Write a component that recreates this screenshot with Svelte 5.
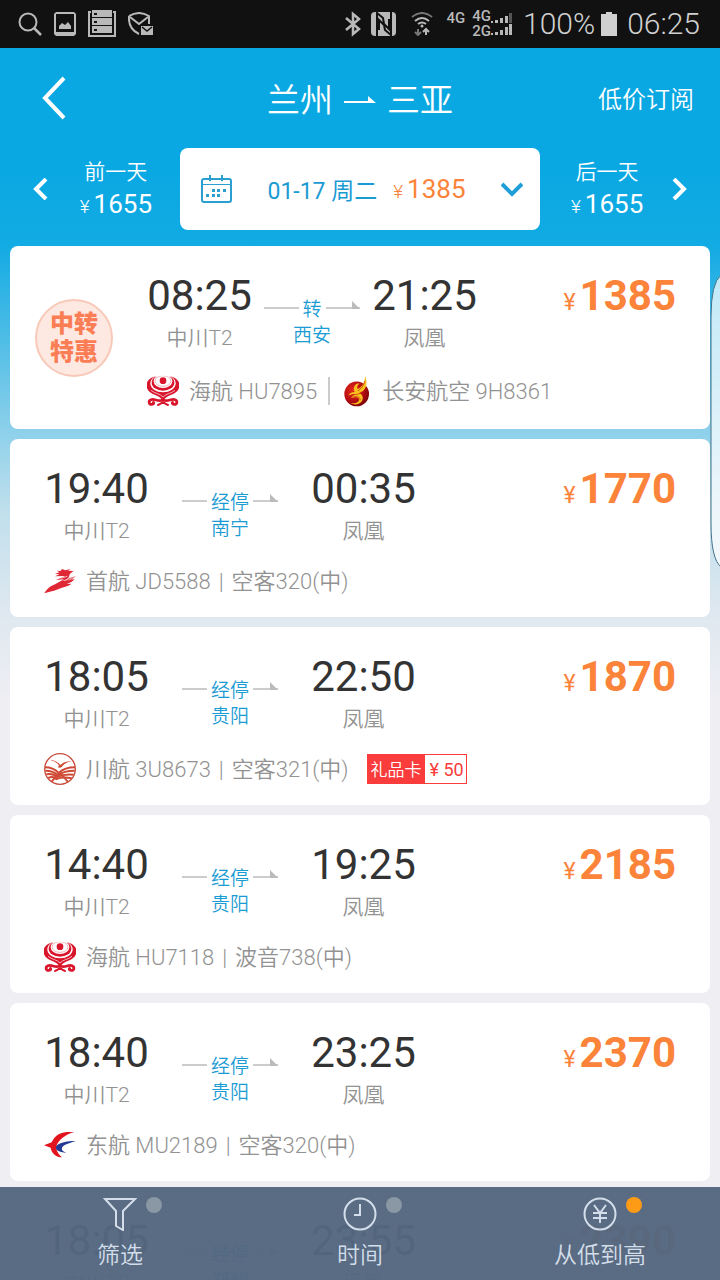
<script>
  const flights = [
    { dep: '08:25', arr: '21:25', from: '中川T2', to: '凤凰', via: '转', city: '西安', price: 1385, transfer: true,
      legs: [{ logo: 'hna', name: '海航 HU7895' }, { logo: 'changan', name: '长安航空 9H8361' }] },
    { dep: '19:40', arr: '00:35', from: '中川T2', to: '凤凰', via: '经停', city: '南宁', price: 1770,
      legs: [{ logo: 'capital', name: '首航 JD5588', plane: '空客320(中)' }] },
    { dep: '18:05', arr: '22:50', from: '中川T2', to: '凤凰', via: '经停', city: '贵阳', price: 1870, gift: 50,
      legs: [{ logo: 'sichuan', name: '川航 3U8673', plane: '空客321(中)' }] },
    { dep: '14:40', arr: '19:25', from: '中川T2', to: '凤凰', via: '经停', city: '贵阳', price: 2185,
      legs: [{ logo: 'hna', name: '海航 HU7118', plane: '波音738(中)' }] },
    { dep: '18:40', arr: '23:25', from: '中川T2', to: '凤凰', via: '经停', city: '贵阳', price: 2370,
      legs: [{ logo: 'eastern', name: '东航 MU2189', plane: '空客320(中)' }] },
    { dep: '18:05', arr: '23:55', from: '中川T2', to: '凤凰', via: '经停', city: '郑州', price: 2390, legs: [] }
  ];
  const tabs = [
    { icon: 'filter', label: '筛选', active: false },
    { icon: 'clock', label: '时间', active: false },
    { icon: 'yen', label: '从低到高', active: true }
  ];
</script>

{#snippet airline(kind)}
  {#if kind === 'hna'}
    <svg class="logo" viewBox="0 0 96 96" aria-hidden="true">
      <path fill="#d9152b" d="M30 4C-8 8-10 44 16 56c15 6 27 11 32 22 5-11 17-16 32-22C106 44 104 8 66 4Z" />
      <ellipse cx="48" cy="25" rx="38" ry="27" fill="#fff" />
      <ellipse cx="48" cy="23" rx="34" ry="24" fill="#d9152b" />
      <ellipse cx="48" cy="19" rx="28" ry="20" fill="#fff" />
      <ellipse cx="48" cy="18" rx="24" ry="16" fill="none" stroke="#e58b93" stroke-width="2" />
      <path fill="#fff" d="M26 0h44v6Q48-2 26 6Z" />
      <circle cx="48" cy="17" r="10" fill="#d9152b" />
      <path fill="none" stroke="#fff" stroke-width="2" d="M12 46c12 10 28 10 36 20 8-10 24-10 36-20" />
      <g fill="none" stroke="#d9152b" stroke-width="8" stroke-linecap="round">
        <path d="M46 75c-11 7-24-5-34-1-9 4-7 15 3 14 5 0 7-4 4-6" />
        <path d="M50 75c11 7 24-5 34-1 9 4 7 15-3 14-5 0-7-4-4-6" />
        <path stroke-width="6" d="M33 90c6-2 10-5 15-9 5 4 9 7 15 9" />
      </g>
    </svg>
  {:else if kind === 'changan'}
    <svg class="logo narrow" viewBox="0 0 80 98" aria-hidden="true">
      <defs>
        <radialGradient id="ball" cx="35%" cy="35%" r="70%">
          <stop offset="0" stop-color="#e4291c" /><stop offset="0.6" stop-color="#b70d12" /><stop offset="1" stop-color="#7d0509" />
        </radialGradient>
      </defs>
      <circle cx="39" cy="58" r="38" fill="url(#ball)" />
      <path fill="#f8c01c" d="M65 2c9 24 4 46-18 53 12 5 14 19 6 28-9 10-24 9-33 3 15 2 26-1 26-11 0-8-12-8-24-5 2-5 8-9 14-12-8 0-14 0-23 5 4-8 12-11 20-11-5-7-4-17 4-24 3-3 8-3 11-1-7 3-9 10-6 16C60 34 64 20 65 2Z" />
      <path fill="none" stroke="#c61b10" stroke-width="2" d="M64 18c-3 14-10 23-21 31M30 61c9-1 18-2 25-10M26 68c12-4 24-1 24 9" />
    </svg>
  {:else if kind === 'capital'}
    <svg class="logo" viewBox="0 0 96 96" aria-hidden="true">
      <g fill="#e02835">
        <path d="M96 12 80 25c-6 4-2 9-7 13-6 6-12 7-19 10l22-2 16-4c-6 9-14 11-24 15l14-1c-9 9-22 9-33 13L29 77 1 85c9-15 18-22 32-27l27-15-24 2c9-5 20-7 27-12l-30 1 14-6-14-1 13-5-8-5 12 1 4-6 10 4 16-4-8 5 16 1 8-6Z" />
        <path opacity="0.6" d="m90 27-15 12 21-6-14 13-26 7ZM74 60 40 74l-14 4 18-18Z" />
      </g>
      <path fill="none" stroke="#fff" stroke-width="2" d="M50 40l20-6" />
    </svg>
  {:else if kind === 'sichuan'}
    <svg class="logo" viewBox="0 0 96 96" aria-hidden="true">
      <circle cx="48" cy="48" r="46" fill="#fff" stroke="#c84d3c" stroke-width="4" />
      <path fill="#cf4a35" d="M18 20c14 2 23 6 31 16 8-8 20-12 34-11-13 2-22 7-29 16-4 4-9 4-13 1 3-1 4-3 3-6-6-8-15-12-26-16Z" />
      <g fill="none" stroke="#cf4a35" stroke-width="6">
        <path d="M3 43c20 0 32 8 41 17 11-10 24-17 49-17" />
        <path d="M4 53c17 0 29 5 37 14 12-9 30-14 51-14" />
        <path d="M7 64c15-3 25 1 32 8 13-6 30-9 50-7" />
        <path d="M13 75c11-5 18-3 24 3 13-5 28-6 46-2" />
        <path d="M23 86c8-11 15-19 23-26 9 7 17 15 26 27" />
      </g>
    </svg>
  {:else}
    <svg class="logo" viewBox="0 0 96 96" aria-hidden="true">
      <path fill="#e3141e" d="M91 9C70 14 50 28 40 44c-7 14-1 27 14 41C33 85 22 70 20 56L0 49l23-9C35 13 54 7 91 9Z" />
      <path fill="#243a94" d="M96 36C72 43 58 48 54 56c-3 6 2 11 13 15-22-1-34-9-31-18 5-11 31-17 60-17Z" />
    </svg>
  {/if}
{/snippet}

{#snippet chevron(d)}
  <svg class="chev" viewBox="0 0 22 22" aria-hidden="true"><path {d} fill="none" stroke="currentColor" stroke-width="4" /></svg>
{/snippet}

<div class="screen">
  <div class="status">
    <div class="group">
      <svg width="24" height="26" viewBox="0 0 24 26" aria-hidden="true"><g fill="none" stroke="#b9b9b9" stroke-width="2"><circle cx="10" cy="11" r="8.5" /><path d="m16 17 7 7" stroke-width="2.5" /></g></svg>
      <svg width="22" height="24" viewBox="0 0 22 24" aria-hidden="true"><path fill="#b9b9b9" fill-rule="evenodd" d="M2 0h18l2 2v20l-2 2H2l-2-2V2ZM2 2v18h18V2Z" /><path fill="#b9b9b9" d="M5 17v-3l3-3 3 2 3-3 3 4v3Z" /></svg>
      <svg width="28" height="28" viewBox="0 0 28 28" aria-hidden="true"><path fill="none" stroke="#b9b9b9" stroke-width="2" d="M3 2H1v24h26V2h-2" /><path fill="#b9b9b9" d="M4 0h20v7H4zM4 8h20v7H4zM4 16h20v7H4z" /><path fill="#111" d="M6 3h3v2H6zM6 11h3v2H6zM6 19h3v2H6z" /></svg>
      <svg width="26" height="24" viewBox="0 0 26 24" aria-hidden="true"><g fill="none" stroke="#b9b9b9" stroke-width="2"><path d="M1 4q10-6 20 0v8M1 4q-1 13 10 18M2 5l9 7 9-7" /></g><path fill="#b9b9b9" d="M13 14h12v9H13z" /><path fill="none" stroke="#111" stroke-width="1.5" d="m14 15 5 4 5-4" /></svg>
    </div>
    <div class="group right">
      <svg width="16" height="26" viewBox="0 0 16 26" aria-hidden="true"><path fill="none" stroke="#b9b9b9" stroke-width="2.5" d="m1 7 13 11-6 5V3l6 5L1 19" /></svg>
      <svg width="26" height="25" viewBox="0 0 26 25" aria-hidden="true"><rect width="25" height="24" rx="4" fill="#b9b9b9" /><path fill="none" stroke="#111" stroke-width="2" d="M6 24V1l6 5 1 6 5 5V7M20 0v23l-6-5-1-5-5-5v10" /></svg>
      <svg class="wifi" width="22" height="24" viewBox="0 0 22 24" aria-hidden="true"><g fill="none" stroke="#b9b9b9" stroke-width="2"><path stroke="#777" d="M1 5q10-8 20 0" /><path d="M4 9q7-6 14 0M7 12q4-3 8 0" /><path stroke="#777" d="M7 17v6m-3-3 3 3 3-3" /><path d="M15 23v-6m-3 3 3-3 3 3" /></g><circle cx="11" cy="14" r="1.5" fill="#b9b9b9" /></svg>
      <span class="net single">4G</span>
      <span class="net">4G<br />2G</span>
      <svg class="bars" width="22" height="24" viewBox="0 0 22 24" aria-hidden="true"><path fill="#b9b9b9" d="M0 9h2v2H0zM4 8h3v3H4zM9 6h3v5H9zM14 4h3v7h-3zM0 21h2v2H0zM4 20h3v3H4zM9 18h3v5H9zM14 15h3v8h-3zM18 12h3v11h-3z" /><path fill="#555" d="M18 1h3v10h-3z" /></svg>
      <span class="big percent">100%</span>
      <svg width="16" height="24" viewBox="0 0 16 24" aria-hidden="true"><path fill="#d0d0d0" d="M5 0h6v2h5v22H0V2h5Z" /></svg>
      <span class="big">06:25</span>
    </div>
  </div>

  <header>
    <button class="back" aria-label="返回"><svg width="26" height="44" viewBox="0 0 26 44" aria-hidden="true"><path d="M22 2 3 22l19 20" fill="none" stroke="#fff" stroke-width="4" /></svg></button>
    <h1>兰州 <svg width="32" height="10" viewBox="0 0 32 10" aria-hidden="true"><path fill="#fff" d="M0 5h24V0l8 7H0Z" /></svg> 三亚</h1>
    <button class="subscribe">低价订阅</button>
  </header>

  <div class="dates">
    <button class="day">
      {@render chevron('m16 1-10 10 10 10')}
      <span class="day-text"><span>前一天</span><span class="amount"><small>¥</small>1655</span></span>
    </button>
    <button class="current">
      <svg width="31" height="28" viewBox="0 0 31 28" aria-hidden="true"><g fill="none" stroke="#2a9fd0" stroke-width="2"><rect x="1" y="4" width="29" height="23" rx="2" /><path d="M9 0v6M21 0v6" /><path stroke-width="1" d="M1 9.500h29" /></g><path fill="#2a9fd0" d="M11 14h3v3h-3zM16 14h3v3h-3zM22 14h3v3h-3zM5 19h3v3H5zM11 19h3v3h-3zM16 19h3v3h-3z" /></svg>
      <span class="picked">01-17 周二 <span class="amount orange"><small>¥</small>1385</span></span>
      <span class="blue">{@render chevron('m1 6 10 10 10-10')}</span>
    </button>
    <button class="day next">
      <span class="day-text"><span>后一天</span><span class="amount"><small>¥</small>1655</span></span>
      {@render chevron('m6 1 10 10-10 10')}
    </button>
  </div>

  <main>
    {#each flights as f}
      <article class:transfer={f.transfer}>
        {#if f.transfer}<div class="badge"><span>中转<br />特惠</span></div>{/if}
        <div class="body">
          <div class="route">
            <div class="stop"><strong>{f.dep}</strong><span>{f.from}</span></div>
            <div class="via">
              <div class="line">
                <i></i><span>{f.via}</span><i></i>
                <svg width="8" height="8" viewBox="0 0 8 8" aria-hidden="true"><path fill="#bbb" d="M0 0 8 8H0Z" /></svg>
              </div>
              <span>{f.city}</span>
            </div>
            <div class="stop"><strong>{f.arr}</strong><span>{f.to}</span></div>
            <div class="price"><small>¥</small>{f.price}</div>
          </div>
          <div class="legs">
            {#each f.legs as leg, i}
              {#if i > 0}<span class="rule"></span>{/if}
              {@render airline(leg.logo)}
              <span class="leg">{leg.name}{#if leg.plane}<span class="bar">|</span>{leg.plane}{/if}</span>
            {/each}
            {#if f.gift}<span class="gift"><b>礼品卡</b><span>¥ {f.gift}</span></span>{/if}
          </div>
        </div>
      </article>
    {/each}
  </main>

  <svg class="edge" width="10" height="294" viewBox="0 0 10 294" aria-hidden="true">
    <path fill="#fff" fill-opacity="0.72" stroke="#47748a" d="M11 0Q1 8 1 42v206q0 36 10 44" />
  </svg>

  <nav>
    {#each tabs as t}
      <button>
        <span class="tab-icon">
          <svg width="34" height="34" viewBox="0 0 34 34" aria-hidden="true">
            <g fill="none" stroke="#d3deea" stroke-width="2">
              {#if t.icon === 'filter'}
                <path d="M2 2h30L20 14v19l-7-4V14Z" />
              {:else if t.icon === 'clock'}
                <circle cx="17" cy="17" r="15.5" /><path d="M17 7v11H11" />
              {:else}
                <circle cx="17" cy="17" r="15.5" /><path d="m11 8 6 8 6-8M17 16v10M10 16h14M10 21h14" />
              {/if}
            </g>
          </svg>
          <i class="dot" class:active={t.active}></i>
        </span>
        <span>{t.label}</span>
      </button>
    {/each}
  </nav>
</div>

<style>
  :global(body) { margin: 0; }
  .screen {
    position: relative;
    display: flex;
    flex-direction: column;
    height: 100vh;
    overflow: hidden;
    font-family: Roboto, "Noto Sans CJK SC", sans-serif;
    color: #fff;
    background: linear-gradient(#0aa8e3 0, #0aa8e3 170px, #12abe3 245px, #4fbde6 340px, #8fd1eb 434px, #c0dfec 510px, #dfe8f0 615px, #eeeef3 700px);
  }
  button { border: 0; padding: 0; background: none; color: inherit; font: inherit; cursor: pointer; }
  svg { display: block; flex: none; }

  .status { display: flex; justify-content: space-between; align-items: center; flex: none; height: 48px; padding: 0 20px 0 18px; background: #111; color: #b9b9b9; }
  .group { display: flex; align-items: center; gap: 12px; }
  .group.right { gap: 10px; }
  .wifi { margin: 0 4px; }
  .net { font-size: 15px; line-height: 15px; font-weight: 500; }
  .net.single { padding-bottom: 12px; margin-right: -3px; }
  .bars { margin-left: -10px; }
  .big { font-size: 30px; line-height: 48px; color: #d0d0d0; font-weight: 300; }
  .percent { margin-right: -4px; }

  header { display: grid; grid-template-columns: 1fr auto 1fr; align-items: center; flex: none; height: 100px; padding: 0 26px; }
  .back { justify-self: start; padding-left: 16px; }
  h1 { display: flex; align-items: center; gap: 11px; margin: 0; padding-top: 5px; font-size: 33px; line-height: 48px; font-weight: 350; }
  .subscribe { justify-self: end; padding-top: 4px; font-size: 24px; line-height: 32px; font-weight: 350; }

  .dates { display: grid; grid-template-columns: 1fr 2fr 1fr; flex: none; height: 82px; margin-bottom: 16px; }
  .day { display: flex; justify-content: space-between; align-items: center; padding: 0 28px 0 30px; }
  .day.next { padding: 0 30px 0 31px; }
  .chev { width: 22px; height: 22px; }
  .day-text { display: flex; flex-direction: column; align-items: center; font-size: 21px; line-height: 32px; font-weight: 350; }
  .amount { font-size: 26px; font-weight: 400; }
  .amount small { margin-right: 4px; font-size: 19px; font-weight: 300; }
  .current { display: flex; justify-content: space-between; align-items: center; padding: 0 17px 0 21px; border-radius: 8px; background: #fff; }
  .picked { display: flex; align-items: center; gap: 16px; font-size: 23px; color: #1b9bd3; }
  .orange { color: #fb833a; }
  .blue { color: #1f9fd6; }

  main { display: flex; flex-direction: column; gap: 10px; flex: 1; min-height: 0; padding: 0 10px; overflow-y: auto; scrollbar-width: none; }
  article { display: flex; align-items: center; flex: none; padding: 24px 34px 20px 34px; border-radius: 8px; background: #fff; color: #929292; }
  article.transfer { gap: 34px; padding: 24px 34px 22px 25px; }
  .badge { display: grid; place-items: center; flex: none; box-sizing: border-box; width: 78px; height: 78px; margin-bottom: 2px; border: 2px solid #f8c9b8; border-radius: 50%; background: #fee9e2; color: #fb7d55; font-size: 24px; line-height: 28px; font-weight: 900; }
  .body { flex: 1; min-width: 0; }
  .route { display: grid; grid-template-columns: 105px 96px 105px 1fr; column-gap: 33px; }
  .transfer .route { column-gap: 12px; }
  .stop { display: flex; flex-direction: column; align-items: center; font-size: 21px; line-height: 32px; font-weight: 350; }
  .stop strong { font-size: 42px; line-height: 52px; font-weight: 400; color: #333; }
  .via { padding-top: 27px; text-align: center; font-size: 19px; line-height: 26px; color: #1b9bd3; font-weight: 350; }
  .line { position: relative; display: flex; align-items: center; gap: 4px; }
  .line i { flex: 1; height: 2px; margin-bottom: 4px; background: #ccc; }
  .line svg { position: absolute; right: 0; top: 4px; }
  .price { text-align: right; font-size: 42px; line-height: 52px; font-weight: 700; color: #fb833a; }
  .price small { margin-right: 4px; font-size: 23px; font-weight: 400; }
  .legs { display: flex; align-items: center; height: 32px; margin-top: 18px; }
  .transfer .legs { margin-top: 21px; }
  .logo { width: 32px; height: 32px; margin-right: 10px; }
  .logo.narrow { width: 26px; margin-right: 12px; }
  .leg { padding-top: 1px; font-size: 22px; line-height: 32px; font-weight: 350; white-space: nowrap; }
  .bar { margin: 0 8px; }
  .rule { width: 2px; height: 28px; margin: 0 14px 0 11px; background: #ccc; }
  .gift { display: flex; box-sizing: border-box; height: 30px; margin-left: 18px; border: 1px solid #fb3c3c; font-size: 17px; line-height: 30px; color: #fb3c3c; }
  .gift b { padding: 0 3px; background: #fb3c3c; color: #fff; font-weight: 350; }
  .gift span { padding: 0 2px 0 5px; font-size: 18px; }

  .edge { position: absolute; right: 0; top: 275px; }

  nav { position: absolute; left: 0; right: 0; bottom: 0; display: grid; grid-template-columns: repeat(3, 1fr); height: 93px; background: rgba(84, 103, 127, 0.97); color: #d3deea; }
  nav button { display: flex; flex-direction: column; align-items: center; gap: 9px; padding-top: 10px; font-size: 23px; line-height: 32px; font-weight: 350; }
  .tab-icon { position: relative; }
  .dot { position: absolute; left: 43px; top: 0; width: 16px; height: 16px; border-radius: 50%; background: #8a98a6; }
  .dot.active { background: #fd9a16; }
</style>
